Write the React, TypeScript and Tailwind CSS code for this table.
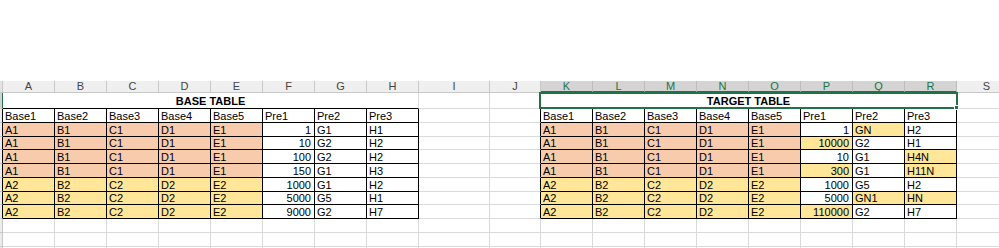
import React from 'react';

type Fill = 'w' | 's' | 'y';
type CellSpec = { t?: string; num?: boolean; fill?: Fill; black?: boolean };

const COLS: { k: string; w: number }[] = [
  { k: 'A', w: 52 }, { k: 'B', w: 52 }, { k: 'C', w: 52 }, { k: 'D', w: 52 }, { k: 'E', w: 52 },
  { k: 'F', w: 52 }, { k: 'G', w: 52 }, { k: 'H', w: 52 }, { k: 'I', w: 71 }, { k: 'J', w: 51 },
  { k: 'K', w: 52 }, { k: 'L', w: 52 }, { k: 'M', w: 52 }, { k: 'N', w: 52 }, { k: 'O', w: 52 },
  { k: 'P', w: 52 }, { k: 'Q', w: 52 }, { k: 'R', w: 52 }, { k: 'S', w: 60 },
];

const W: Record<number, string> = {
  52: 'w-[52px]',
  71: 'w-[71px]',
  51: 'w-[51px]',
  60: 'w-[60px]',
};

const H: Record<number, string> = {
  12: 'h-[12px]',
  13: 'h-[13px]',
  14: 'h-[14px]',
  16: 'h-[16px]',
};

const FILL: Record<Fill, string> = {
  w: 'bg-white',
  s: 'bg-[#f8cbad]',
  y: 'bg-[#ffe699]',
};

const HEAD = ['Base1', 'Base2', 'Base3', 'Base4', 'Base5', 'Pre1', 'Pre2', 'Pre3'];

const BASE: [string, string, string, string, string, string, string, string][] = [
  ['A1', 'B1', 'C1', 'D1', 'E1', '1', 'G1', 'H1'],
  ['A1', 'B1', 'C1', 'D1', 'E1', '10', 'G2', 'H2'],
  ['A1', 'B1', 'C1', 'D1', 'E1', '100', 'G2', 'H2'],
  ['A1', 'B1', 'C1', 'D1', 'E1', '150', 'G1', 'H3'],
  ['A2', 'B2', 'C2', 'D2', 'E2', '1000', 'G1', 'H2'],
  ['A2', 'B2', 'C2', 'D2', 'E2', '5000', 'G5', 'H1'],
  ['A2', 'B2', 'C2', 'D2', 'E2', '9000', 'G2', 'H7'],
];

const TARGET: { p: string; q: string; r: string; f: [Fill, Fill, Fill] }[] = [
  { p: '1', q: 'GN', r: 'H2', f: ['w', 'y', 'w'] },
  { p: '10000', q: 'G2', r: 'H1', f: ['y', 'w', 'w'] },
  { p: '10', q: 'G1', r: 'H4N', f: ['w', 'w', 'y'] },
  { p: '300', q: 'G1', r: 'H11N', f: ['y', 'w', 'y'] },
  { p: '1000', q: 'G5', r: 'H2', f: ['w', 'w', 'w'] },
  { p: '5000', q: 'GN1', r: 'HN', f: ['w', 'y', 'y'] },
  { p: '110000', q: 'G2', r: 'H7', f: ['y', 'w', 'w'] },
];

const ROW_H = [14, 14, 13, 14, 14, 14, 13, 14];

function Cell({ w, spec }: { w: number; spec: CellSpec }) {
  return (
    <div
      className={
        'shrink-0 h-full flex items-end overflow-hidden whitespace-nowrap border-r border-b leading-none text-[11px] text-black ' +
        W[w] +
        ' ' +
        FILL[spec.fill ?? 'w'] +
        ' ' +
        (spec.black ? 'border-black' : 'border-[#dadada]') +
        ' ' +
        (spec.num ? 'justify-end pr-[3px]' : 'justify-start pl-[2px]')
      }
    >
      {spec.t}
    </div>
  );
}

function RowHeader({ black }: { black?: boolean }) {
  return (
    <div
      className={
        'shrink-0 w-[3px] h-full bg-[#ececec] border-r border-b border-b-[#c8c8c8] ' +
        (black ? 'border-r-black' : 'border-r-[#c8c8c8]')
      }
    />
  );
}

function buildRow(i: number): CellSpec[] {
  const cells: CellSpec[] = [];
  const baseFill: Fill = i === 0 ? 'w' : i <= 4 ? 's' : 'y';
  for (let c = 0; c < COLS.length; c++) {
    const k = COLS[c].k;
    if (c <= 7) {
      const t = i === 0 ? HEAD[c] : BASE[i - 1][c];
      cells.push({ t, num: i > 0 && c === 5, fill: c <= 4 ? baseFill : 'w', black: true });
    } else if (k === 'I' || k === 'J' || k === 'S') {
      cells.push({});
    } else {
      const j = c - 10;
      let t = '';
      let fill: Fill = 'w';
      if (i === 0) t = HEAD[j];
      else if (j <= 4) {
        t = BASE[i - 1][j];
        fill = baseFill;
      } else {
        const r = TARGET[i - 1];
        t = j === 5 ? r.p : j === 6 ? r.q : r.r;
        fill = r.f[j - 5];
      }
      cells.push({ t, num: i > 0 && j === 5, fill, black: true });
    }
  }
  return cells;
}

export default function App() {
  return (
    <div className="w-[999px] h-[248px] overflow-hidden bg-white font-['Liberation_Sans',Arial,sans-serif]">
      <div className="h-[81px]" />
      {/* Column header row */}
      <div className="flex h-[12px] w-max">
        <div className="shrink-0 w-[3px] h-full bg-[#e3e3e3] border-r border-b border-[#c8c8c8]" />
        {COLS.map((c, idx) => {
          const sel = idx >= 10 && idx <= 17;
          return (
            <div
              key={c.k}
              className={
                'shrink-0 h-full flex items-center justify-center text-[11px] leading-none border-r ' +
                W[c.w] +
                ' ' +
                (sel
                  ? 'bg-[#d4d4d4] text-[#217346] border-r-[#bcbcbc] border-b-2 border-b-[#217346]'
                  : 'bg-[#efefef] text-[#444] border-r-[#c8c8c8] border-b border-b-[#c8c8c8]')
              }
            >
              {c.k}
            </div>
          );
        })}
      </div>
      {/* Title row */}
      <div className="relative flex h-[16px] w-max">
        <div className="shrink-0 w-[3px] h-full bg-[#d2d2d2] border-r border-r-[#217346] border-b border-b-[#c8c8c8]" />
        <div className="shrink-0 w-[416px] h-full flex items-end justify-center border-r border-r-[#dadada] border-b border-b-black font-bold text-[11px] leading-none pb-[1px] text-black">
          BASE TABLE
        </div>
        <div className="shrink-0 w-[71px] h-full border-r border-b border-[#dadada]" />
        <div className="shrink-0 w-[51px] h-full border-r border-b border-[#dadada]" />
        <div className="shrink-0 w-[416px] h-full flex items-end justify-center border-r border-r-[#dadada] border-b border-b-black font-bold text-[11px] leading-none pb-[1px] text-black">
          TARGET TABLE
        </div>
        <div className="shrink-0 w-[60px] h-full border-r border-b border-[#dadada]" />
        <div className="absolute left-[539px] top-[-1px] w-[419px] h-[17px] border-2 border-[#217346] pointer-events-none" />
        <div className="absolute left-[954px] top-[12px] w-[5px] h-[5px] bg-[#217346] border border-white" />
      </div>
      {/* Table rows */}
      {ROW_H.map((h, i) => {
        const cells = buildRow(i);
        return (
          <div key={i} className={'flex w-max ' + H[h]}>
            <RowHeader black />
            {cells.map((spec, c) => {
              const k = COLS[c].k;
              if (k === 'J') {
                return (
                  <div
                    key={c}
                    className="shrink-0 w-[51px] h-full bg-white border-r border-r-black border-b border-b-[#dadada]"
                  />
                );
              }
              if (k === 'I' || k === 'S') {
                return (
                  <div
                    key={c}
                    className={'shrink-0 h-full bg-white border-r border-b border-[#dadada] ' + W[COLS[c].w]}
                  />
                );
              }
              return <Cell key={c} w={COLS[c].w} spec={spec} />;
            })}
          </div>
        );
      })}
      {/* Empty rows */}
      {[0, 1, 2].map((e) => (
        <div key={'e' + e} className="flex w-max h-[14px]">
          <RowHeader />
          {COLS.map((c) => (
            <div key={c.k} className={'shrink-0 h-full bg-white border-r border-b border-[#dadada] ' + W[c.w]} />
          ))}
        </div>
      ))}
    </div>
  );
}
